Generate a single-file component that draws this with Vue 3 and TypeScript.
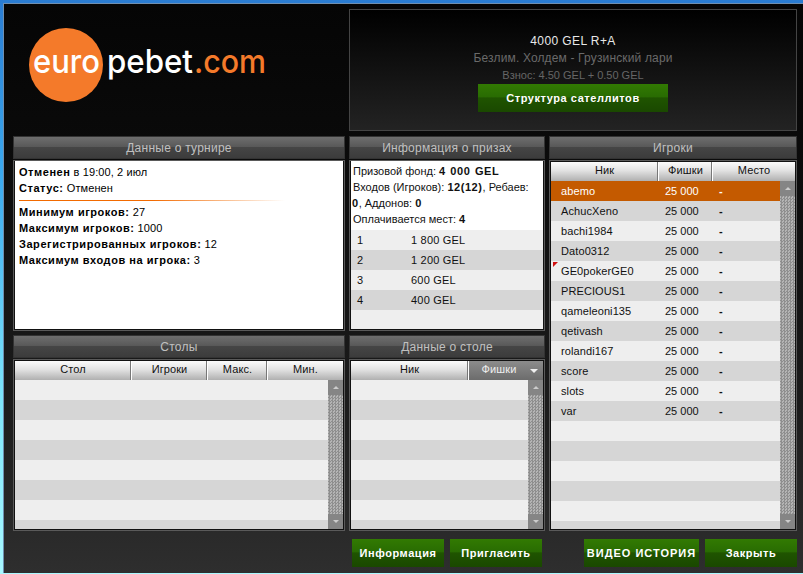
<script setup lang="ts">
const players = ['abemo', 'AchucXeno', 'bachi1984', 'Dato0312', 'GE0pokerGE0', 'PRECIOUS1', 'qameleoni135', 'qetivash', 'rolandi167', 'score', 'slots', 'var']
const prizes = [
  { place: 1, sum: '1 800 GEL' },
  { place: 2, sum: '1 200 GEL' },
  { place: 3, sum: '600 GEL' },
  { place: 4, sum: '400 GEL' },
]
const playerRows = Array.from({ length: 18 }, (_, i) => players[i] ?? '')
const emptyRows = 8
</script>

<template>
  <div class="window">
    <div class="shell">
      <div class="top">
        <div class="logo">
          <svg width="332" height="122" viewBox="13 9 332 122" aria-label="europebet.com">
            <circle cx="66" cy="65" r="37" fill="#f47a2a" />
            <g font-family="Inter, sans-serif" font-size="33" font-weight="500">
              <text x="33" y="73" textLength="67" lengthAdjust="spacingAndGlyphs" fill="#fff">euro</text>
              <text x="107" y="73" textLength="86" lengthAdjust="spacingAndGlyphs" fill="#fff">pebet</text>
              <text x="194" y="73" textLength="72" lengthAdjust="spacingAndGlyphs" fill="#f47a2a">.com</text>
            </g>
          </svg>
        </div>
        <div class="summary">
          <div class="summary-title">4000 GEL R+A</div>
          <div class="summary-sub">Безлим. Холдем - Грузинский лари</div>
          <div class="summary-fee">Взнос: 4.50 GEL + 0.50 GEL</div>
          <button class="btn btn-wide">Структура сателлитов</button>
        </div>
      </div>

      <div class="grid">
        <section class="panel">
          <h2 class="panel-head">Данные о турнире</h2>
          <div class="box">
            <div class="sheet info">
              <p><b>Отменен</b> в 19:00, 2 июл</p>
              <p><b>Статус:</b> Отменен</p>
              <div class="divider"></div>
              <p><b>Минимум игроков:</b> 27</p>
              <p><b>Максимум игроков:</b> 1000</p>
              <p><b>Зарегистрированных игроков:</b> 12</p>
              <p><b>Максимум входов на игрока:</b> 3</p>
            </div>
          </div>
        </section>

        <section class="panel">
          <h2 class="panel-head">Информация о призах</h2>
          <div class="box">
            <div class="sheet prizes">
              <div class="prize-text">
                <p>Призовой фонд: <b>4 000 GEL</b></p>
                <p>Входов (Игроков): <b>12(12)</b>, Ребаев:</p>
                <p class="wrapped"><b>0</b>, Аддонов: <b>0</b></p>
                <p>Оплачивается мест: <b>4</b></p>
              </div>
              <div class="rows prize-rows">
                <div v-for="p in prizes" :key="p.place" class="row prize-row">
                  <span class="prize-place">{{ p.place }}</span><span>{{ p.sum }}</span>
                </div>
                <div class="row prize-filler"></div>
              </div>
            </div>
          </div>
        </section>

        <section class="panel panel-tall">
          <h2 class="panel-head">Игроки</h2>
          <div class="box">
            <div class="thead">
              <div class="th" style="width: 108px">Ник</div>
              <div class="th" style="width: 54px">Фишки</div>
              <div class="th grow">Место</div>
            </div>
            <div class="tbody">
              <div class="rows">
                <div v-for="(name, i) in playerRows" :key="i" :class="['row', 'player-row', { selected: i === 0 }]">
                  <template v-if="name">
                    <span v-if="name === 'GE0pokerGE0'" class="flag"></span>
                    <span class="col-nick">{{ name }}</span>
                    <span class="col-chips">25 000</span>
                    <span class="col-place">-</span>
                  </template>
                </div>
              </div>
              <div class="scrollbar">
                <div class="sb-btn"><i class="arrow-up"></i></div>
                <div class="sb-track"></div>
                <div class="sb-btn"><i class="arrow-down"></i></div>
              </div>
            </div>
          </div>
        </section>

        <section class="panel">
          <h2 class="panel-head">Столы</h2>
          <div class="box">
            <div class="thead">
              <div class="th" style="width: 117px">Стол</div>
              <div class="th" style="width: 76px">Игроки</div>
              <div class="th" style="width: 60px">Макс.</div>
              <div class="th grow">Мин.</div>
            </div>
            <div class="tbody">
              <div class="rows"><div v-for="n in emptyRows" :key="n" class="row"></div></div>
              <div class="scrollbar">
                <div class="sb-btn"><i class="arrow-up"></i></div>
                <div class="sb-track"></div>
                <div class="sb-btn"><i class="arrow-down"></i></div>
              </div>
            </div>
          </div>
        </section>

        <section class="panel">
          <h2 class="panel-head">Данные о столе</h2>
          <div class="box">
            <div class="thead">
              <div class="th" style="width: 118px">Ник</div>
              <div class="th th-active grow">Фишки<i class="arrow-sort"></i></div>
            </div>
            <div class="tbody">
              <div class="rows"><div v-for="n in emptyRows" :key="n" class="row"></div></div>
              <div class="scrollbar">
                <div class="sb-btn"><i class="arrow-up"></i></div>
                <div class="sb-track"></div>
                <div class="sb-btn"><i class="arrow-down"></i></div>
              </div>
            </div>
          </div>
        </section>
      </div>

      <div class="actions">
        <button class="btn btn-info">Информация</button>
        <button class="btn">Пригласить</button>
        <button class="btn btn-video">ВИДЕО ИСТОРИЯ</button>
        <button class="btn">Закрыть</button>
      </div>
    </div>
  </div>
</template>

<style scoped>
.window {
  width: 803px;
  height: 574px;
  box-sizing: border-box;
  padding: 3px 0 1px 3px;
  overflow: hidden;
  background: linear-gradient(180deg, #2a7cd2 0%, #3aa8ee 30%, #7fe6fb 70%, #a8f8ff 100%);
  font-family: 'Liberation Sans', Arial, sans-serif;
  font-size: 11px;
}
.shell {
  height: 100%;
  box-sizing: border-box;
  border-top: 1px solid #6f8fb0;
  border-left: 1px solid #6f8fb0;
  padding: 5px 6px 0 9px;
  background: linear-gradient(180deg, #050505 0%, #0a0a0a 25%, #1c1c1c 70%, #2e2e2e 100%);
}
.top { display: flex; gap: 4px; height: 122px; }
.logo { width: 332px; }
.logo svg { display: block; }
.summary {
  flex: 1;
  box-sizing: border-box;
  border: 1px solid #444;
  background: linear-gradient(180deg, #000 0%, #232323 100%);
  padding-top: 23px;
  display: flex;
  flex-direction: column;
  align-items: center;
}
.summary-title { color: #e8e8e8; font-size: 12px; line-height: 17px; letter-spacing: .4px; }
.summary-sub { color: #6a6a6a; font-size: 12px; line-height: 17px; letter-spacing: .15px; }
.summary-fee { color: #666; font-size: 11px; line-height: 16px; margin-bottom: 1px; letter-spacing: 0; }
.grid {
  margin-top: 5px;
  display: grid;
  grid-template-columns: 332px 196px 248px;
  grid-template-rows: 195px 196px;
  gap: 4px;
}
.panel { display: flex; flex-direction: column; min-height: 0; }
.panel-tall { grid-column: 3; grid-row: 1 / span 2; }
.panel:nth-child(4) { grid-column: 1; grid-row: 2; }
.panel:nth-child(5) { grid-column: 2; grid-row: 2; }
.panel-head {
  flex: none;
  height: 23px;
  box-sizing: border-box;
  margin: 0 0 1px;
  border: 1px solid #333;
  background: linear-gradient(180deg, #6e6e6e 0%, #585858 48%, #454545 50%, #3c3c3c 100%);
  color: #c0c0c0;
  font-size: 12px;
  font-weight: 400;
  line-height: 22px;
  letter-spacing: .25px;
  text-align: center;
}
.box {
  flex: 1;
  min-height: 0;
  display: flex;
  flex-direction: column;
  box-sizing: border-box;
  border: 1px solid #5a5a5a;
  padding: 1px;
  background: #111;
  overflow: hidden;
}
.sheet { flex: 1; min-height: 0; margin-top: -1px; display: flex; flex-direction: column; background: #fff; color: #000; }
p { margin: 0; }
b { letter-spacing: .55px; }
.info { padding: 3px 4px; line-height: 16px; letter-spacing: .1px; }
.divider {
  flex: none;
  height: 1px;
  margin: 4px 54px 3px 0;
  background: linear-gradient(90deg, #f26a00 0%, #f26a00 50%, #fff 100%);
}
.prize-text { flex: none; height: 69px; box-sizing: border-box; padding: 2px 0 0 2px; line-height: 16px; color: #111; }
.prize-text b { word-spacing: 1px; }
.wrapped { margin-left: -1px; }
.rows { flex: 1; min-width: 0; overflow: hidden; }
.prize-rows { display: flex; flex-direction: column; }
.prize-filler { flex: 1; }
.row {
  flex: none;
  height: 20px;
  line-height: 20px;
  background: #eee;
  color: #111;
}
.row:nth-child(even) { background: #d6d6d6; }
.prize-row { display: flex; padding-left: 6px; letter-spacing: .2px; }
.prize-place { width: 54px; }
.player-row { position: relative; display: flex; padding-left: 10px; }
.player-row.selected { background: #c45a00; color: #fff; }
.col-nick { width: 104px; letter-spacing: .1px; }
.col-chips { width: 54px; }
.col-place { font-weight: 700; }
.flag {
  position: absolute;
  left: 2px;
  top: 1px;
  width: 0;
  height: 0;
  border-top: 5px solid #d01010;
  border-right: 5px solid transparent;
}
.thead { flex: none; display: flex; height: 19px; background: #111; }
.th {
  flex: none;
  box-sizing: border-box;
  border-right: 1px solid #fff;
  background: linear-gradient(180deg, #fbfbfb 0%, #e2e2e2 45%, #b0b0b0 100%);
  box-shadow: inset -1px 0 #777;
  color: #111;
  line-height: 17px;
  letter-spacing: .1px;
  text-align: center;
}
.grow { flex: 1; border-right: 0; box-shadow: none; }
.th-active {
  position: relative;
  padding-right: 14px;
  background: linear-gradient(180deg, #8c8c8c 0%, #6c6c6c 100%);
  color: #eee;
}
.arrow-sort {
  position: absolute;
  right: 5px;
  top: 8px;
  border: 4px solid transparent;
  border-top-color: #f0f0f0;
  border-bottom: 0;
}
.tbody { flex: 1; min-height: 0; display: flex; }
.scrollbar { flex: none; width: 15px; display: flex; flex-direction: column; }
.sb-btn {
  flex: none;
  height: 15px;
  display: flex;
  align-items: center;
  justify-content: center;
  background: #858585;
}
.sb-track {
  flex: 1;
  background: repeating-conic-gradient(#8e8e8e 0 25%, #b4b4b4 0 50%) 0 0 / 3px 3px;
}
.arrow-up { border: 3px solid transparent; border-bottom-color: #ccc; border-top: 0; }
.arrow-down { border: 3px solid transparent; border-top-color: #ccc; border-bottom: 0; }
.actions { display: flex; margin-top: 8px; justify-content: flex-end; }
.btn {
  flex: none;
  width: 92px;
  height: 28px;
  padding: 0;
  border: 0;
  margin-left: 6px;
  background: linear-gradient(180deg, #327a02 0%, #296c02 45%, #1f5400 50%, #1a4800 100%);
  color: #fff;
  font-family: 'Liberation Sans', Arial, sans-serif;
  font-size: 11px;
  font-weight: 700;
  letter-spacing: .55px;
}
.btn-wide { width: 190px; margin-left: 0; }
.btn-video { width: 115px; margin-left: 42px; letter-spacing: 1px; }
</style>

<style>
html, body { margin: 0; background: #000; }
</style>
